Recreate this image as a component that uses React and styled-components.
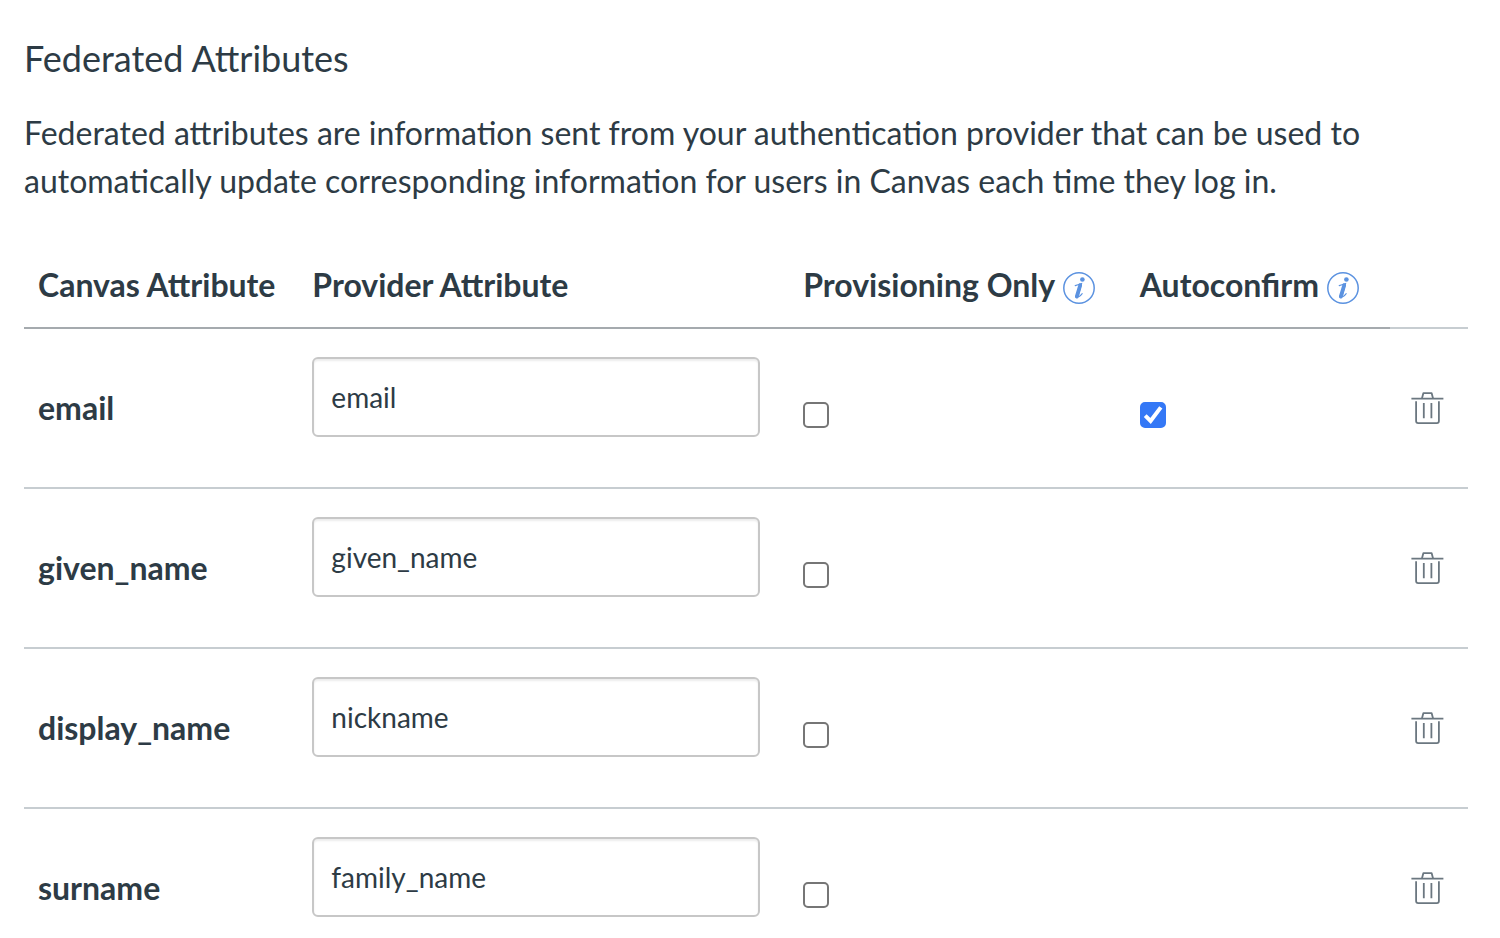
import React from "react";
import styled, { createGlobalStyle } from "styled-components";

const ink = "#2d3b45";

const GlobalStyle = createGlobalStyle`
  *, *::before, *::after { box-sizing: border-box; }
  body {
    margin: 0;
    background: #fff;
    color: ${ink};
    font-family: Lato, "Liberation Sans", sans-serif;
    font-size: 32px;
    line-height: 48px;
  }
`;

const Page = styled.main`
  height: 100vh;
  overflow: hidden;
  padding: 31px 32px 0 24px;
`;

const Title = styled.h2`
  margin: 0 0 24px;
  font-size: 36px;
  font-weight: 400;
  line-height: 54px;
`;

const Intro = styled.p`
  margin: 0 0 40px;
`;

const Table = styled.table`
  width: 100%;
  table-layout: fixed;
  border-collapse: separate;
  border-spacing: 0;
`;

const Column = styled.col`
  width: ${({ $share }) => $share}%;
`;

const HeadCell = styled.th`
  padding: 16px 14px 18px;
  border-bottom: 2px solid ${({ $light }) => ($light ? "#c7cdd1" : "#a5aaae")};
  font-weight: 700;
  text-align: left;
  vertical-align: middle;
  white-space: nowrap;
`;

const HeadLabel = styled.span`
  display: flex;
  align-items: center;
  gap: 8px;
`;

const RowHead = styled.th`
  padding: 0 14px;
  border-bottom: 2px solid #c7cdd1;
  font-weight: 700;
  text-align: left;
  vertical-align: middle;
`;

const Cell = styled.td`
  padding: ${({ $tall }) => ($tall ? "28px 14px 50px" : "0 14px")};
  border-bottom: 2px solid #c7cdd1;
  vertical-align: middle;
`;

const TextInput = styled.input`
  display: block;
  width: 100%;
  max-width: 448px;
  height: 80px;
  padding: 0 17px;
  border: 2px solid #c7c7c7;
  border-radius: 6px;
  background: #fff;
  box-shadow: inset 0 2px 2px rgba(0, 0, 0, 0.075);
  color: ${ink};
  font-family: inherit;
  font-size: 28px;
`;

const CheckboxWrap = styled.label`
  display: grid;
  width: 26px;
  margin-top: 14px;

  & > * { grid-area: 1 / 1; }
`;

const Checkbox = styled.input`
  appearance: none;
  display: block;
  width: 26px;
  height: 26px;
  margin: 0;
  border: 2px solid #767676;
  border-radius: 5px;
  background: #fff;

  &:checked {
    border-color: #3478f6;
    background: #3478f6;
  }
`;

const CheckMark = styled.svg`
  width: 26px;
  height: 26px;
  visibility: hidden;
  pointer-events: none;

  ${Checkbox}:checked + & { visibility: visible; }
`;

const IconButton = styled.button`
  display: block;
  flex: none;
  width: 32px;
  height: 32px;
  margin: ${({ $margin }) => $margin};
  padding: 0;
  border: 0;
  background: none;
  color: ${({ $color }) => $color};
  cursor: pointer;

  svg { display: block; overflow: visible; }
`;

function InfoButton({ label }) {
  return (
    <IconButton type="button" aria-label={label} $color="#5b92e0" $margin="6px 0 0">
      <svg width="32" height="32" viewBox="0 0 32 32" aria-hidden="true">
        <circle cx="16" cy="16" r="15.2" fill="none" stroke="currentColor" strokeWidth="1.5" />
        <circle cx="19.4" cy="7.5" r="2.3" fill="currentColor" />
        <path
          d="M12.2 13.6C14.6 13 16.6 12.3 18.6 11.6L15.3 23.6C14.9 25.4 16.6 25 19.2 21.6"
          fill="none"
          stroke="currentColor"
          strokeWidth="1.1"
          strokeLinecap="round"
        />
        <path d="M17.2 13.2L13.8 24.6" fill="none" stroke="currentColor" strokeWidth="3.8" strokeLinecap="round" />
      </svg>
    </IconButton>
  );
}

function TrashButton({ label }) {
  return (
    <IconButton type="button" aria-label={label} $color="#6b7780" $margin="0 0 0 7px">
      <svg
        width="32"
        height="32"
        viewBox="0 0 32 32"
        fill="none"
        stroke="currentColor"
        strokeWidth="1.8"
        aria-hidden="true"
      >
        <path d="M0.4 6.7H32.4" />
        <path d="M11 6.2L12.4 1.1H20.6L22 6.2" strokeLinejoin="round" />
        <path d="M5.1 9.2V29Q5.1 31.1 7.2 31.1H25.8Q27.9 31.1 27.9 29V9.2" />
        <path d="M12.8 11V26.3M20.4 11V26.3" />
      </svg>
    </IconButton>
  );
}

function Tick({ label, defaultChecked }) {
  return (
    <CheckboxWrap>
      <Checkbox type="checkbox" aria-label={label} defaultChecked={defaultChecked} />
      <CheckMark viewBox="0 0 26 26" aria-hidden="true">
        <path d="M5.2 13.6L10.6 19L20.8 5.4" fill="none" stroke="#fff" strokeWidth="4" />
      </CheckMark>
    </CheckboxWrap>
  );
}

const attributes = [
  { name: "email", provider: "email", autoconfirm: true },
  { name: "given_name", provider: "given_name" },
  { name: "display_name", provider: "nickname" },
  { name: "surname", provider: "family_name" },
];

export default function App() {
  return (
    <>
      <GlobalStyle />
      <Page>
        <Title>Federated Attributes</Title>
        <Intro>
          Federated attributes are information sent from your authentication provider that can be used to
          automatically update corresponding information for users in Canvas each time they log in.
        </Intro>
        <Table>
          <colgroup>
            <Column $share={19} />
            <Column $share={34} />
            <Column $share={23.3} />
            <Column $share={18.3} />
            <Column $share={5.4} />
          </colgroup>
          <thead>
            <tr>
              <HeadCell scope="col">Canvas Attribute</HeadCell>
              <HeadCell scope="col">Provider Attribute</HeadCell>
              <HeadCell scope="col">
                <HeadLabel>
                  Provisioning Only
                  <InfoButton label="About provisioning only" />
                </HeadLabel>
              </HeadCell>
              <HeadCell scope="col">
                <HeadLabel>
                  Autoconfirm
                  <InfoButton label="About autoconfirm" />
                </HeadLabel>
              </HeadCell>
              <HeadCell as="td" $light />
            </tr>
          </thead>
          <tbody>
            {attributes.map(({ name, provider, autoconfirm }) => (
              <tr key={name}>
                <RowHead scope="row">
                  <label htmlFor={`attribute-${name}`}>{name}</label>
                </RowHead>
                <Cell $tall>
                  <TextInput id={`attribute-${name}`} type="text" defaultValue={provider} />
                </Cell>
                <Cell>
                  <Tick label={`Provisioning only for ${name}`} />
                </Cell>
                <Cell>
                  {autoconfirm && <Tick label={`Autoconfirm ${name}`} defaultChecked />}
                </Cell>
                <Cell>
                  <TrashButton label={`Remove ${name}`} />
                </Cell>
              </tr>
            ))}
          </tbody>
        </Table>
      </Page>
    </>
  );
}
